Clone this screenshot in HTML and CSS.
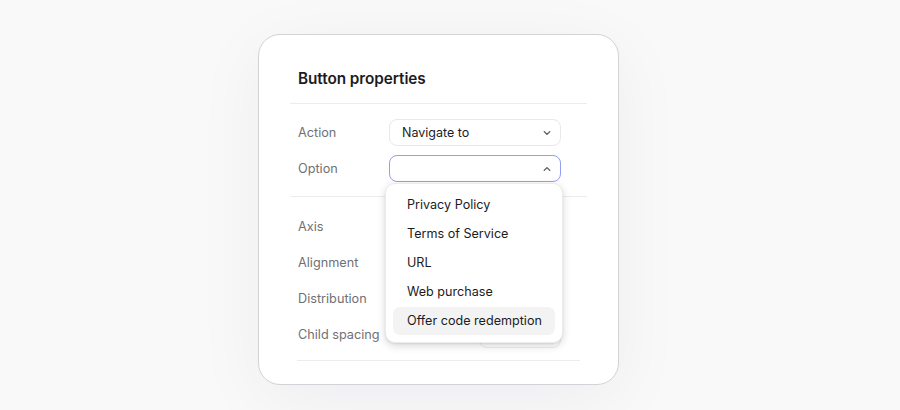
FILE: index.html
```html
<!DOCTYPE html>
<html>
<head>
<meta charset="utf-8">
<link rel="stylesheet" href="styles.css">
</head>
<body>
<div class="stage">
  <div class="card">
    <div class="title">Button properties</div>
    <div class="divider"></div>
    <div class="section">
      <div class="row">
        <div class="label">Action</div>
        <div class="select">
          <span>Navigate to</span>
          <svg class="chev" width="8" height="6" viewBox="0 0 8 6"><path d="M1.2 1.6 L4 4.4 L6.8 1.6" fill="none" stroke="#555" stroke-width="1.3" stroke-linecap="round" stroke-linejoin="round"/></svg>
        </div>
      </div>
      <div class="row">
        <div class="label">Option</div>
        <div class="select open">
          <span></span>
          <svg class="chev" width="8" height="6" viewBox="0 0 8 6"><path d="M1.2 4.4 L4 1.6 L6.8 4.4" fill="none" stroke="#555" stroke-width="1.3" stroke-linecap="round" stroke-linejoin="round"/></svg>
          <div class="menu">
            <div class="item">Privacy Policy</div>
            <div class="item">Terms of Service</div>
            <div class="item">URL</div>
            <div class="item">Web purchase</div>
            <div class="item hover">Offer code redemption</div>
          </div>
        </div>
      </div>
    </div>
    <div class="divider"></div>
    <div class="section layout">
      <div class="row"><div class="label">Axis</div><div class="ctl"></div></div>
      <div class="row"><div class="label">Alignment</div><div class="ctl"></div></div>
      <div class="row"><div class="label">Distribution</div><div class="ctl"></div></div>
      <div class="row"><div class="label">Child spacing</div><div class="ctl small"></div></div>
    </div>
    <div class="divider inset"></div>
  </div>
</div>
</body>
</html>
```

FILE: styles.css
```css
* { box-sizing: border-box; }
html, body { margin: 0; padding: 0; }
body {
  width: 900px;
  height: 410px;
  background: #f9f9fa;
  font-family: Inter, "Noto Sans", sans-serif;
  overflow: hidden;
}
.stage {
  height: 410px;
  display: flex;
  justify-content: flex-start;
  padding: 34px 0 0 258px;
}
.card {
  width: 361px;
  height: 351px;
  background: #fff;
  border: 1px solid #d3d3d7;
  border-radius: 22px;
  padding: 0 31px;
  box-shadow: 0 14px 70px rgba(20, 20, 40, 0.05);
  display: flex;
  flex-direction: column;
}
.title {
  font-size: 15.3px;
  font-weight: 600;
  color: #1c1c1e;
  padding: 34px 0 0 8px;
  height: 68px;
  line-height: 20px;
  letter-spacing: -0.05px;
}
.divider {
  height: 1px;
  background: #ececee;
  flex: none;
}
.divider.inset { margin: 0 7px; }
.section {
  padding: 15px 26px 14px 8px;
  display: flex;
  flex-direction: column;
  gap: 9px;
}
.section.layout { padding-top: 16px; padding-bottom: 12px; }
.row {
  display: flex;
  align-items: center;
  justify-content: space-between;
  height: 27px;
}
.label {
  font-size: 12.7px;
  color: #707074;
}
.select {
  position: relative;
  width: 172px;
  height: 27px;
  border: 1px solid #e8e8eb;
  border-radius: 8px;
  display: flex;
  align-items: center;
  justify-content: space-between;
  padding: 0 9px 0 12px;
  font-size: 12.5px;
  color: #1c1c1e;
}
.select.open { border-color: #959cf2; }
.chev { display: block; }
.ctl {
  width: 172px;
  height: 27px;
}
.ctl.small {
  width: 82px;
  border: 1px solid #ececee;
  border-radius: 8px;
}
.menu {
  position: absolute;
  top: 27px;
  left: -5px;
  width: 178px;
  padding: 7px;
  background: #fff;
  border-radius: 10px;
  border: 1px solid #ececee;
  box-shadow: 0 3px 8px rgba(0, 0, 0, 0.15), 0 1px 2px rgba(0, 0, 0, 0.08);
  display: flex;
  flex-direction: column;
  gap: 1px;
  z-index: 5;
}
.item {
  height: 28px;
  line-height: 28px;
  padding-left: 14px;
  font-size: 12.6px;
  color: #1c1c1e;
  border-radius: 7px;
}
.item.hover { background: #f3f3f4; }
```
